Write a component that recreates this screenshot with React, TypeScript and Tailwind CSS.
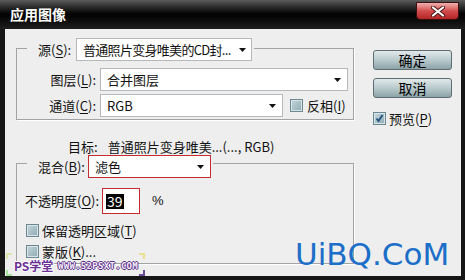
import React from "react";

const U: React.FC<{ children: React.ReactNode }> = ({ children }) => (
  <span className="underline underline-offset-[2px]">{children}</span>
);

const Arrow = () => (
  <svg width="7" height="4" viewBox="0 0 7 4" className="shrink-0">
    <path d="M0 0h7L3.5 4z" fill="#111" />
  </svg>
);

const Select: React.FC<{ className?: string; children: React.ReactNode }> = ({ className = "", children }) => (
  <div
    className={`flex h-[23px] items-center justify-between bg-white pl-[6px] pr-[6px] ${className}`}
  >
    <span className="overflow-hidden whitespace-nowrap">{children}</span>
    <Arrow />
  </div>
);

const Check: React.FC<{ checked?: boolean }> = ({ checked }) => (
  <span className="flex h-[13px] w-[13px] shrink-0 items-center justify-center border border-[#6c8892] bg-gradient-to-br from-[#c6d6db] to-[#8eabb4] shadow-[inset_0_0_0_1px_#d9e4e7]">
    {checked && (
      <svg width="9" height="9" viewBox="0 0 9 9">
        <path d="M1.5 4.5l2 2.5 4-6" fill="none" stroke="#1f4f7a" strokeWidth="1.8" />
      </svg>
    )}
  </span>
);

const Button: React.FC<{ children: React.ReactNode }> = ({ children }) => (
  <div className="flex h-[20px] w-[79px] items-center justify-center rounded-[3px] border border-[#5d6d72] bg-gradient-to-b from-[#e2e9ea] via-[#b9cacd] to-[#8ca3a8] text-[14px] leading-[16px] text-black">
    {children}
  </div>
);

const Corner: React.FC<{ className: string }> = ({ className }) => (
  <span className={`absolute h-[6px] w-[6px] ${className}`} />
);

export default function App() {
  return (
    <div className="relative h-[280px] w-[465px] overflow-hidden bg-[#161616] font-['Noto_Sans_CJK_SC','Noto_Sans',sans-serif] text-[13px] text-[#111]">
      {/* TITLE BAR */}
      <div className="flex h-[29px] items-start justify-between bg-gradient-to-b from-[#5c5c5c] via-[#030303] to-[#1f1f1f]">
        <span className="ml-[10px] mt-[6px] text-[14px] font-bold leading-[17px] text-white">应用图像</span>
        <div className="mr-[6px] mt-[2px] flex h-[18px] w-[43px] items-center justify-center rounded-b-[4px] border border-[#3b0f0f] bg-gradient-to-b from-[#eeb0b0] via-[#d24b4c] to-[#b32424]">
          <svg width="14" height="11" viewBox="0 0 14 11">
            <path d="M2 1.5l10 8M12 1.5l-10 8" stroke="#4a1414" strokeWidth="4" strokeLinecap="round" />
            <path d="M2 1.5l10 8M12 1.5l-10 8" stroke="#fff" strokeWidth="2.2" strokeLinecap="round" />
          </svg>
        </div>
      </div>

      {/* CLIENT */}
      <div className="ml-[5px] mr-[4px] flex h-[247px] bg-[#eeeeee] pl-[11px]">
        {/* LEFT COLUMN */}
        <div className="w-[338px]">
          <div className="mt-[19px] h-[72px] border border-[#a3a3a3] shadow-[1px_1px_0_#fff]">
            <div className="-mt-[11px] ml-[10px] flex w-fit items-center bg-[#eeeeee] pl-[11px] pr-[2px]">
              <span className="w-[38px] leading-[16px]">
                源(<U>S</U>):
              </span>
              <Select className="w-[176px] border border-[#b5b9bc] !pr-[5px]">
                <span className="tracking-[-0.7px]">普通照片变身唯美的CD封...</span>
              </Select>
            </div>
            <div className="mt-[7px] flex items-center">
              <span className="w-[83px] pr-[4px] text-right leading-[16px]">
                图层(<U>L</U>):
              </span>
              <Select className="w-[248px] border border-[#b5b9bc]">合并图层</Select>
            </div>
            <div className="mt-[3px] flex items-center">
              <span className="w-[83px] pr-[4px] text-right leading-[16px]">
                通道(<U>C</U>):
              </span>
              <Select className="w-[183px] border border-[#b5b9bc]">RGB</Select>
              <span className="ml-[7px]">
                <Check />
              </span>
              <span className="ml-[4px] leading-[16px]">
                反相(<U>I</U>)
              </span>
            </div>
          </div>

          <div className="mt-[19px] pl-[52px] leading-[16px] whitespace-nowrap">
            目标:<span className="ml-[10px]">普通照片变身唯美...(..., RGB)</span>
          </div>

          <div className="mt-[8px] h-[101px] border border-[#a3a3a3] shadow-[1px_1px_0_#fff]">
            <div className="-mt-[9px] ml-[10px] flex w-fit items-center bg-[#eeeeee] pl-[11px] pr-[2px]">
              <span className="w-[50px] leading-[16px]">
                混合(<U>B</U>):
              </span>
              <Select className="w-[123px] border border-[#c62a32]">滤色</Select>
            </div>
            <div className="mt-[10px] flex items-center pl-[8px]">
              <span className="w-[77px] leading-[16px] whitespace-nowrap">
                不透明度(<U>O</U>):
              </span>
              <div className="flex h-[26px] w-[38px] items-center border border-[#c62a32] bg-white pl-[3px]">
                <span className="bg-black px-[1px] text-[14px] leading-[15px] text-white">39</span>
              </div>
              <span className="ml-[12px] font-['Liberation_Sans',sans-serif] text-[13px]">%</span>
            </div>
            <div className="mt-[9px] flex h-[15px] items-center pl-[9px]">
              <Check />
              <span className="ml-[3px] leading-[15px]">
                保留透明区域(<U>T</U>)
              </span>
            </div>
            <div className="mt-[6px] flex h-[15px] items-center pl-[9px]">
              <Check />
              <span className="ml-[3px] leading-[14px]">
                蒙版(<U>K</U>)...
              </span>
            </div>
          </div>
        </div>

        {/* RIGHT COLUMN */}
        <div className="ml-[19px] w-[79px] pt-[21px]">
          <Button>确定</Button>
          <div className="mt-[8px]">
            <Button>取消</Button>
          </div>
          <div className="mt-[13px] flex h-[15px] items-center">
            <Check checked />
            <span className="ml-[3px] leading-[16px]">
              预览(<U>P</U>)
            </span>
          </div>
        </div>
      </div>

      {/* WATERMARKS */}
      <div className="absolute left-[5px] top-[252px] h-[24px] w-[140px]">
        <Corner className="left-[1px] top-[1px] border-l-2 border-t-2 border-[#d8e8b0]" />
        <Corner className="right-0 top-[1px] border-r-2 border-t-2 border-[#e8e090]" />
        <Corner className="bottom-0 left-[1px] border-b-2 border-l-2 border-[#a8e0a0]" />
        <Corner className="bottom-0 right-0 border-b-2 border-r-2 border-[#6a4a9a]" />
        <span className="absolute left-[9px] top-[7px] text-[12px] font-bold leading-[13px] text-[#6b2f95] [text-shadow:1px_0_0_#fff,-1px_0_0_#fff,0_1px_0_#fff,0_-1px_0_#fff]">
          PS学堂
        </span>
        <span className="absolute left-[53px] top-[9px] font-['DejaVu_Sans_Mono',monospace] text-[9px] font-bold leading-[10px] tracking-[0.3px] text-[#f2ecf8] [text-shadow:1px_0_0_#5b2f8a,-1px_0_0_#5b2f8a,0_1px_0_#5b2f8a,0_-1px_0_#5b2f8a]">
          WWW.52PSXT.COM
        </span>
      </div>
      <span className="absolute left-[295px] top-[239px] font-['DejaVu_Sans',sans-serif] text-[31px] leading-[31px] text-[#1c6ec8]">
        UiBQ.CoM
      </span>
    </div>
  );
}
